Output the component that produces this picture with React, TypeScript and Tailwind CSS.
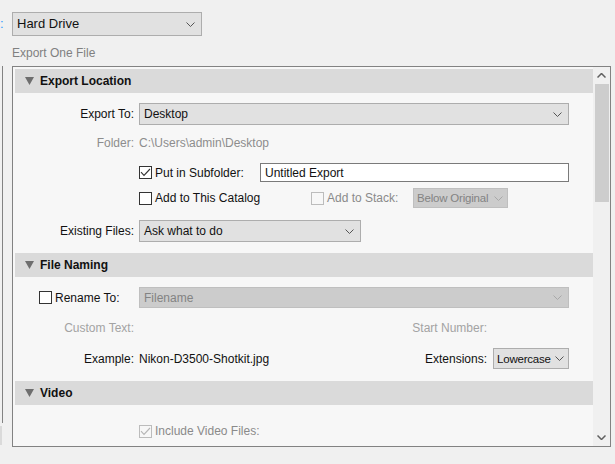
import React from "react";

function Chevron({ color = "#555555" }: { color?: string }) {
  return (
    <svg width="9" height="5" viewBox="0 0 9 5" className="shrink-0">
      <path d="M0.5 0.5 L4.5 4.5 L8.5 0.5" stroke={color} fill="none" strokeWidth="1" />
    </svg>
  );
}

function Select({
  value,
  width,
  disabled,
  small,
}: {
  value: string;
  width: string;
  disabled?: boolean;
  small?: boolean;
}) {
  const base = disabled
    ? "bg-[#cccccc] border border-[#bfbfbf] text-[#838383]"
    : "bg-[#e1e1e1] border border-[#adadad] text-[#111111]";
  const pad = small ? "pl-[3px] pr-[4px] text-[11.5px] tracking-[-0.2px]" : "pl-[4px] pr-[6px]";
  return (
    <div className={`${width} h-full flex items-center justify-between ${pad} ${base}`}>
      <span className="whitespace-nowrap">{value}</span>
      <Chevron color={disabled ? "#a8a8a8" : "#555555"} />
    </div>
  );
}

function Check({ checked, disabled }: { checked?: boolean; disabled?: boolean }) {
  return (
    <span
      className={
        disabled
          ? "w-[13px] h-[13px] shrink-0 flex items-center justify-center border border-[#bcbcbc] bg-[#f7f7f7]"
          : "w-[13px] h-[13px] shrink-0 flex items-center justify-center border border-[#333333] bg-white"
      }
    >
      {checked && (
        <svg width="11" height="9" viewBox="0 0 11 9">
          <path
            d="M1 4.2 L4 7.4 L10 1"
            stroke={disabled ? "#b5b5b5" : "#333333"}
            strokeWidth="1.1"
            fill="none"
          />
        </svg>
      )}
    </span>
  );
}

function Header({ title }: { title: string }) {
  return (
    <div className="h-[24px] shrink-0 flex items-center bg-[#dadada] pl-[10px]">
      <svg width="9" height="8" viewBox="0 0 9 8" className="shrink-0">
        <path d="M0 0 L9 0 L4.5 8 Z" fill="#6e6e6e" />
      </svg>
      <span className="ml-[6px] font-bold text-[#111111]">{title}</span>
    </div>
  );
}

function Label({ children, dim }: { children: React.ReactNode; dim?: boolean }) {
  return (
    <div className={dim ? "w-[119px] shrink-0 text-right text-[#8d8d8d]" : "w-[119px] shrink-0 text-right text-[#111111]"}>
      {children}
    </div>
  );
}

export default function App() {
  return (
    <div className="w-[615px] h-[464px] overflow-hidden bg-[#f0f0f0] flex flex-col text-[12px] leading-[16px] font-['Liberation_Sans',Arial,sans-serif]">
      {/* destination */}
      <div className="mt-[12px] h-[24px] flex items-center shrink-0">
        <span className="w-[12px] text-[13px] text-[#3399ff]">:</span>
        <div className="w-[190px] h-full flex items-center justify-between pl-[4px] pr-[6px] bg-[#e1e1e1] border border-[#adadad] text-[13px] text-[#111111]">
          <span>Hard Drive</span>
          <Chevron />
        </div>
      </div>

      <div className="mt-[9px] pl-[12px] text-[#808080] shrink-0">Export One File</div>

      <div className="mt-[5px] flex items-start shrink-0">
        <div className="w-[12px] shrink-0 flex flex-col">
          <div className="w-[3px] h-[357px] border-r border-[#828282]" />
          <div className="w-[2px] h-[19px] mt-[3px] bg-[#dadada]" />
        </div>

        {/* export panel */}
        <div className="w-[599px] h-[381px] border border-[#828282] bg-[#f7f7f7] flex">
          <div className="w-[580px] pl-[2px] pt-[2px] flex flex-col">
            <Header title="Export Location" />

            <div className="mt-[10px] h-[22px] flex items-center">
              <Label>Export To:</Label>
              <div className="ml-[5px] h-full flex">
                <Select value="Desktop" width="w-[430px]" />
              </div>
            </div>

            <div className="mt-[10px] h-[16px] flex items-center">
              <Label dim>Folder:</Label>
              <span className="ml-[5px] text-[#8d8d8d]">C:\Users\admin\Desktop</span>
            </div>

            <div className="mt-[12px] h-[19px] flex items-center">
              <div className="w-[119px] shrink-0" />
              <div className="ml-[5px] w-[121px] flex items-center">
                <Check checked />
                <span className="ml-[3px] text-[#111111]">Put in Subfolder:</span>
              </div>
              <div className="w-[309px] h-full flex items-center pl-[4px] bg-white border border-[#7a7a7a] text-[#111111]">
                Untitled Export
              </div>
            </div>

            <div className="mt-[6px] h-[20px] flex items-center">
              <div className="w-[119px] shrink-0" />
              <div className="ml-[5px] w-[172px] flex items-center">
                <Check />
                <span className="ml-[3px] text-[#111111]">Add to This Catalog</span>
              </div>
              <div className="w-[102px] flex items-center">
                <Check disabled />
                <span className="ml-[3px] text-[#8a8a8a]">Add to Stack:</span>
              </div>
              <div className="h-full flex">
                <Select value="Below Original" width="w-[95px]" disabled small />
              </div>
            </div>

            <div className="mt-[12px] h-[22px] flex items-center">
              <Label>Existing Files:</Label>
              <div className="ml-[5px] h-full flex">
                <Select value="Ask what to do" width="w-[222px]" />
              </div>
            </div>

            <div className="mt-[11px]">
              <Header title="File Naming" />
            </div>

            <div className="mt-[10px] h-[21px] flex items-center">
              <div className="w-[119px] shrink-0 pl-[24px] flex items-center">
                <Check />
                <span className="ml-[3px] text-[#111111]">Rename To:</span>
              </div>
              <div className="ml-[5px] h-full flex">
                <Select value="Filename" width="w-[430px]" disabled />
              </div>
            </div>

            <div className="mt-[12px] h-[16px] flex items-center">
              <div className="w-[119px] shrink-0 text-right text-[#a3a3a3]">Custom Text:</div>
              <div className="ml-[5px] w-[430px] flex justify-end pr-[82px] text-[#a3a3a3]">Start Number:</div>
            </div>

            <div className="mt-[12px] h-[21px] flex items-center">
              <Label>Example:</Label>
              <div className="ml-[5px] w-[430px] h-full flex items-center justify-between">
                <span className="text-[#111111]">Nikon-D3500-Shotkit.jpg</span>
                <div className="h-full flex items-center">
                  <span className="mr-[6px] text-[#111111]">Extensions:</span>
                  <div className="h-full flex">
                    <Select value="Lowercase" width="w-[76px]" small />
                  </div>
                </div>
              </div>
            </div>

            <div className="mt-[12px]">
              <Header title="Video" />
            </div>

            <div className="mt-[18px] h-[16px] flex items-center">
              <div className="w-[119px] shrink-0" />
              <div className="ml-[5px] flex items-center">
                <Check checked disabled />
                <span className="ml-[3px] text-[#8a8a8a]">Include Video Files:</span>
              </div>
            </div>
          </div>

          {/* scrollbar */}
          <div className="w-[17px] h-full bg-[#f0f0f0] flex flex-col items-center">
            <div className="h-[17px] w-full flex items-center justify-center">
              <svg width="9" height="5" viewBox="0 0 9 5">
                <path d="M0.5 4.5 L4.5 0.5 L8.5 4.5" stroke="#606060" strokeWidth="1.5" fill="none" />
              </svg>
            </div>
            <div className="w-[14px] ml-[1px] h-[118px] bg-[#cdcdcd]" />
            <div className="flex-1" />
            <div className="h-[17px] w-full flex items-center justify-center">
              <svg width="9" height="5" viewBox="0 0 9 5">
                <path d="M0.5 0.5 L4.5 4.5 L8.5 0.5" stroke="#606060" strokeWidth="1.5" fill="none" />
              </svg>
            </div>
          </div>
        </div>
      </div>
    </div>
  );
}
